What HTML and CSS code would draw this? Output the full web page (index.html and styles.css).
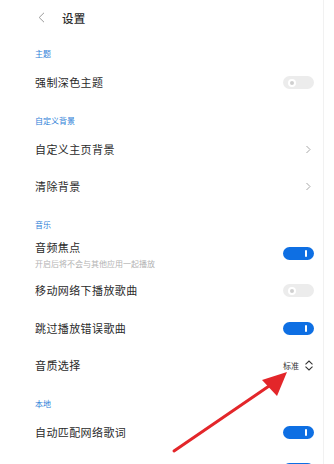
FILE: index.html
```html
<!DOCTYPE html>
<html lang="zh">
<head>
<meta charset="utf-8">
<link rel="stylesheet" href="styles.css">
</head>
<body>
<div class="page">
  <header class="header">
    <svg class="back" width="7" height="11" viewBox="0 0 7 11"><path d="M6 0.8 L1.2 5.5 L6 10.2" fill="none" stroke="#9a9a9a" stroke-width="1"/></svg>
    <span class="title">设置</span>
  </header>

  <section class="section">
    <div class="label">主题</div>
    <div class="row"><span class="text">强制深色主题</span><span class="toggle off"><i></i></span></div>
  </section>

  <section class="section">
    <div class="label">自定义背景</div>
    <div class="row"><span class="text">自定义主页背景</span><svg class="chev" width="7" height="9" viewBox="0 0 7 9"><path d="M1.5 1 L5 4.5 L1.5 8" fill="none" stroke="#a8a8a8" stroke-width="1"/></svg></div>
    <div class="row"><span class="text">清除背景</span><svg class="chev" width="7" height="9" viewBox="0 0 7 9"><path d="M1.5 1 L5 4.5 L1.5 8" fill="none" stroke="#a8a8a8" stroke-width="1"/></svg></div>
  </section>

  <section class="section">
    <div class="label">音乐</div>
    <div class="row">
      <div class="stack"><span class="text">音频焦点</span><span class="sub">开启后将不会与其他应用一起播放</span></div>
      <span class="toggle on"><i></i></span>
    </div>
    <div class="row"><span class="text">移动网络下播放歌曲</span><span class="toggle off"><i></i></span></div>
    <div class="row"><span class="text">跳过播放错误歌曲</span><span class="toggle on"><i></i></span></div>
    <div class="row"><span class="text">音质选择</span>
      <span class="select">标准<svg width="10" height="11" viewBox="0 0 10 11"><path d="M1.5 4.3 L5 1 L8.5 4.3 M1.5 6.7 L5 10 L8.5 6.7" fill="none" stroke="#333" stroke-width="1.1"/></svg></span>
    </div>
  </section>

  <section class="section">
    <div class="label">本地</div>
    <div class="row"><span class="text">自动匹配网络歌词</span><span class="toggle on"><i></i></span></div>
    <div class="row"><span class="text">智能过滤</span><span class="toggle on"><i></i></span></div>
  </section>

  <svg class="arrow" width="334" height="464" viewBox="0 0 334 464">
    <line x1="174" y1="451" x2="272" y2="384" stroke="#e3262a" stroke-width="3" stroke-linecap="round"/>
    <polygon points="287,372 262,380 277,396" fill="#e3262a"/>
  </svg>
</div>
</body>
</html>
```

FILE: styles.css
```css
html, body {
  margin: 0;
  padding: 0;
  background: #fff;
}
body {
  font-family: "Noto Sans CJK SC", "Noto Sans", sans-serif;
  color: #2a2a2a;
  overflow: hidden;
  height: 464px;
}
.page {
  position: relative;
  width: 324px;
  height: 464px;
  box-sizing: border-box;
  border-right: 1px solid #f1f1f1;
  padding: 0 9px 0 35px;
}
.header {
  height: 35px;
  display: flex;
  align-items: center;
  gap: 17px;
  padding-left: 3px;
}
.back { display: block; }
.title {
  font-size: 11.5px;
  font-weight: 500;
  color: #2a2a2a;
  letter-spacing: 0.2px;
}
.section {
  padding-top: 8px;
}
.label {
  height: 21px;
  display: flex;
  align-items: center;
  font-size: 8px;
  color: #2f7fd8;
}
.row {
  height: 37.5px;
  display: flex;
  align-items: center;
  justify-content: space-between;
}
.text {
  font-size: 11px;
  letter-spacing: 0.4px;
  color: #2a2a2a;
  line-height: 17px;
}
.stack {
  display: flex;
  flex-direction: column;
  gap: 2px;
  padding-top: 3px;
}
.sub {
  font-size: 8px;
  color: #b3b3b3;
  line-height: 12px;
}
.chev {
  display: block;
  margin-right: 2px;
}
.toggle {
  width: 31px;
  height: 13px;
  border-radius: 7px;
  position: relative;
  display: block;
}
.toggle.off { background: #ececec; }
.toggle.on { background: #0e6fe3; }
.toggle i {
  position: absolute;
  display: block;
}
.toggle.off i {
  left: 5px;
  top: 2.5px;
  width: 4px;
  height: 4px;
  border: 2px solid #fff;
  border-radius: 50%;
  background: #cfcfcf;
}
.toggle.on i {
  right: 7px;
  top: 3px;
  width: 2px;
  height: 7px;
  border-radius: 1px;
  background: #fff;
}
.select {
  display: flex;
  align-items: center;
  gap: 5px;
  font-size: 8px;
  color: #333;
}
.select svg { display: block; }
.arrow {
  position: absolute;
  left: 0;
  top: 0;
  pointer-events: none;
}
```
